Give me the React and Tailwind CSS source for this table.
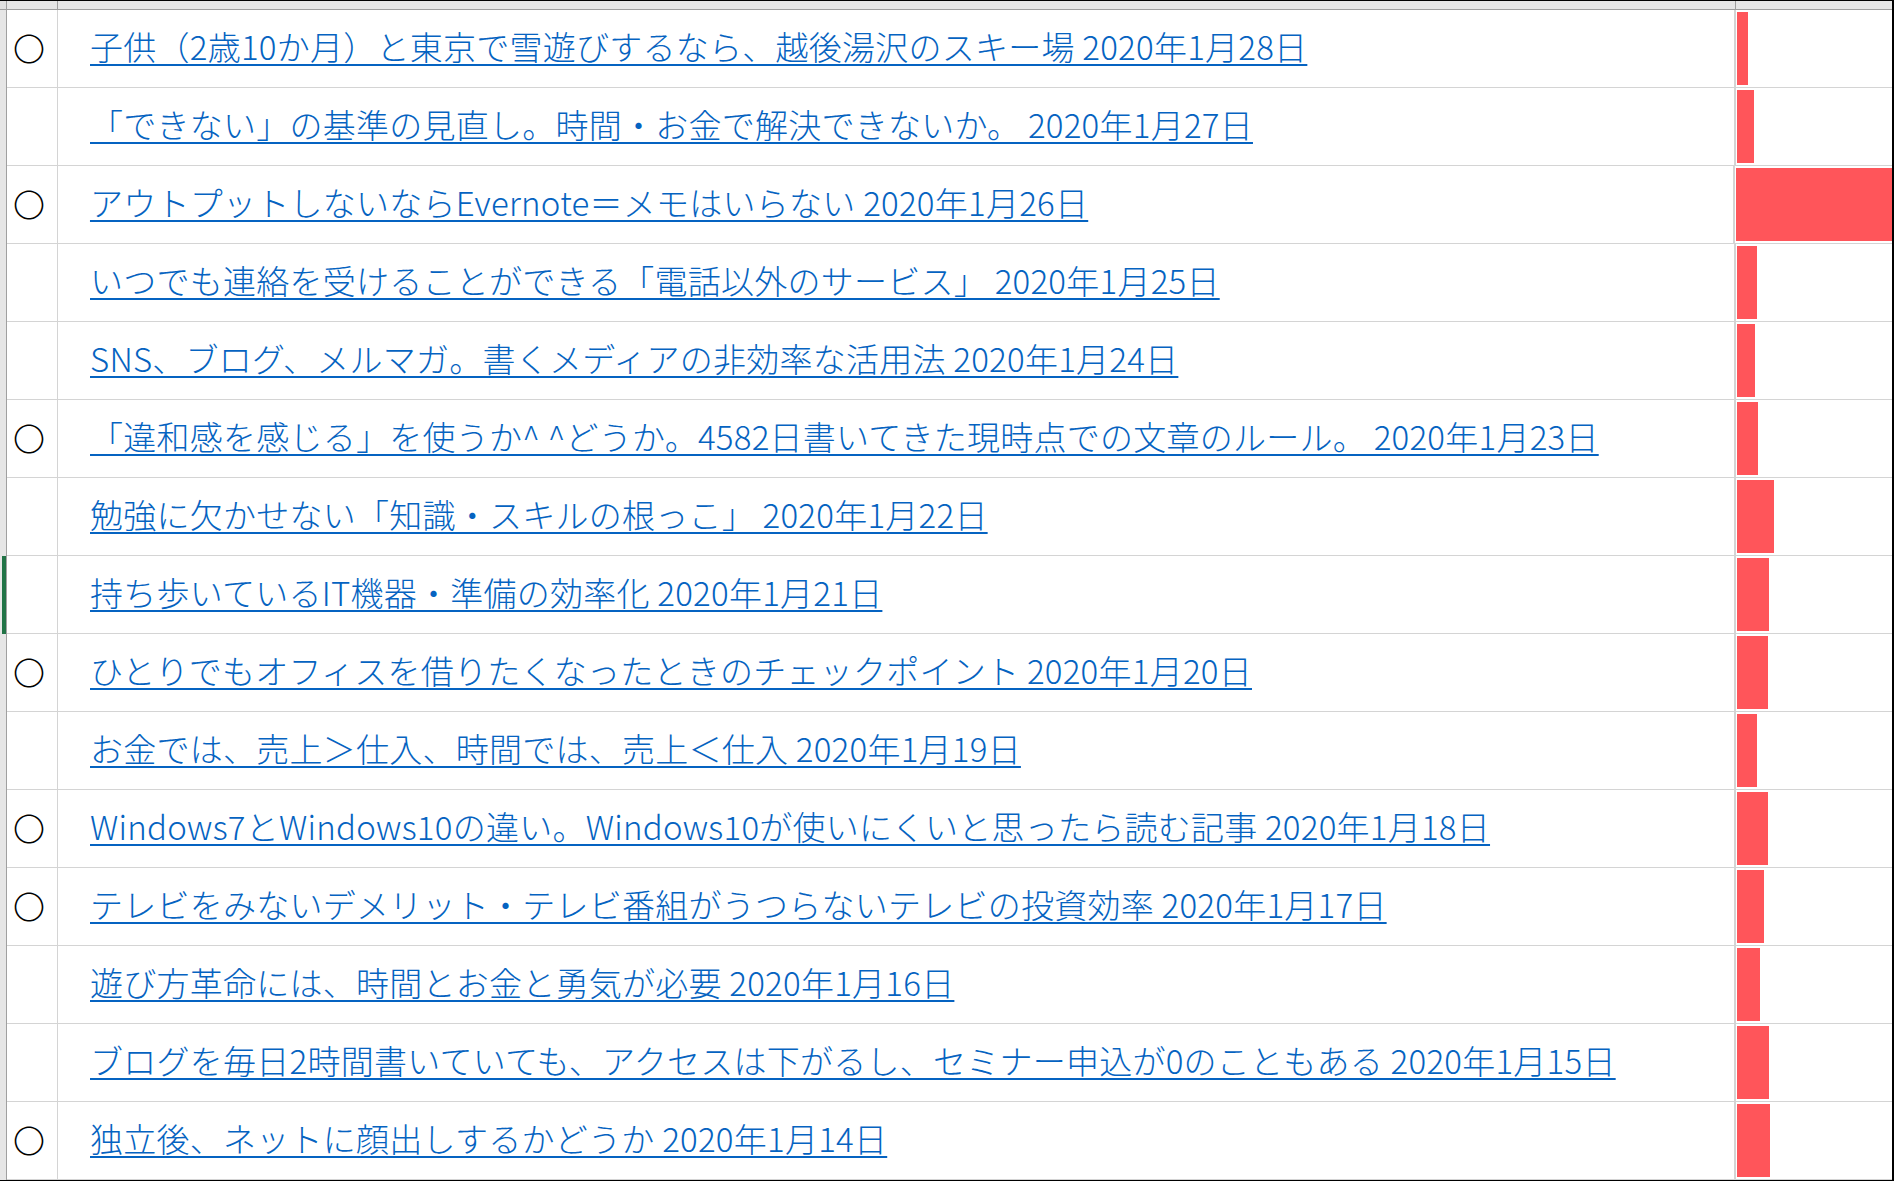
const rows = [
  { t: "子供（2歳10か月）と東京で雪遊びするなら、越後湯沢のスキー場 2020年1月28日", c: true, w: 11 },
  { t: "「できない」の基準の見直し。時間・お金で解決できないか。 2020年1月27日", c: false, w: 17 },
  { t: "アウトプットしないならEvernote＝メモはいらない 2020年1月26日", c: true, w: 156 },
  { t: "いつでも連絡を受けることができる「電話以外のサービス」 2020年1月25日", c: false, w: 20 },
  { t: "SNS、ブログ、メルマガ。書くメディアの非効率な活用法 2020年1月24日", c: false, w: 18 },
  { t: "「違和感を感じる」を使うか^ ^どうか。4582日書いてきた現時点での文章のルール。 2020年1月23日", c: true, w: 21 },
  { t: "勉強に欠かせない「知識・スキルの根っこ」 2020年1月22日", c: false, w: 37 },
  { t: "持ち歩いているIT機器・準備の効率化 2020年1月21日", c: false, w: 32, sel: true },
  { t: "ひとりでもオフィスを借りたくなったときのチェックポイント 2020年1月20日", c: true, w: 31 },
  { t: "お金では、売上＞仕入、時間では、売上＜仕入 2020年1月19日", c: false, w: 20 },
  { t: "Windows7とWindows10の違い。Windows10が使いにくいと思ったら読む記事 2020年1月18日", c: true, w: 31 },
  { t: "テレビをみないデメリット・テレビ番組がうつらないテレビの投資効率 2020年1月17日", c: true, w: 27 },
  { t: "遊び方革命には、時間とお金と勇気が必要 2020年1月16日", c: false, w: 23 },
  { t: "ブログを毎日2時間書いていても、アクセスは下がるし、セミナー申込が0のこともある 2020年1月15日", c: false, w: 32 },
  { t: "独立後、ネットに顔出しするかどうか 2020年1月14日", c: true, w: 33 },
];

export default function App() {
  return (
    <div
      className="w-[1894px] h-[1181px] bg-white overflow-hidden flex flex-col border-t border-b border-r-2 border-black"
      style={{ fontFamily: '"Noto Sans CJK JP", "Noto Sans", sans-serif' }}
    >
      <div className="flex h-[9px] bg-[#e6e6e6] border-b border-[#9e9e9e] shrink-0">
        <div className="w-[7px] border-r border-[#9e9e9e] bg-[#e0e0e0]" />
        <div className="w-[51px] border-r border-[#9e9e9e]" />
        <div className="w-[1678px] border-r border-[#9e9e9e]" />
        <div className="flex-1" />
      </div>
      {rows.map((r, i) => (
        <div key={i} className="flex h-[78px] shrink-0">
          <div className="w-[7px] flex bg-[#e6e6e6] border-r border-[#a0a0a0]">
            <div className="w-[2px]" />
            {r.sel ? <div className="w-[4px] bg-[#217346]" /> : null}
          </div>
          <div className="w-[51px] border-r border-b border-[#d4d4d4] flex items-center pl-[6px] pb-[4px]">
            {r.c ? (
              <span className="text-[32px] leading-none text-black font-light">〇</span>
            ) : null}
          </div>
          <div className="w-[1678px] border-r-2 border-b border-[#d4d4d4] flex items-center pl-[32px] pb-[4px]">
            <span className="text-[33px] leading-none font-light tracking-[0.25px] text-[#0563c1] underline decoration-2 underline-offset-[4px] whitespace-nowrap">
              {r.t}
            </span>
          </div>
          <div className="flex-1 border-b border-[#d4d4d4] py-[2px] pl-[1px]">
            <div className="h-full bg-[#ff555a]" style={{ width: r.w + "px" }} />
          </div>
        </div>
      ))}
    </div>
  );
}
